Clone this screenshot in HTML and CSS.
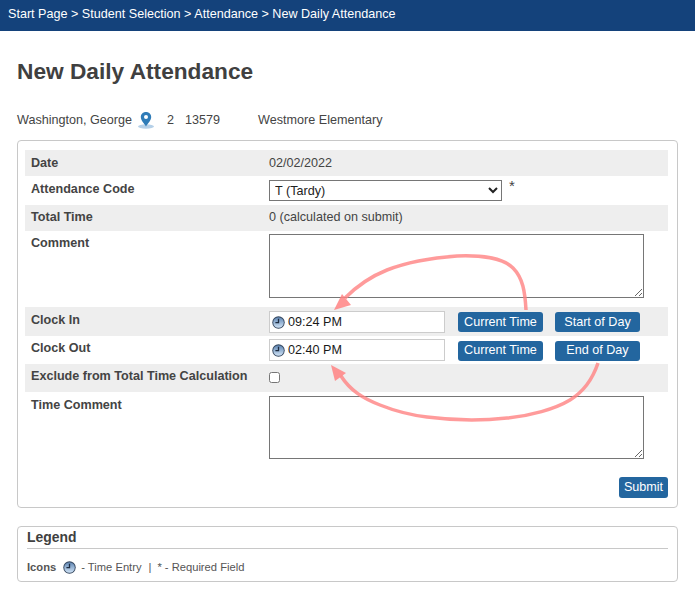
FILE: index.html
```html
<!DOCTYPE html>
<html lang="en">
<head>
  <meta charset="UTF-8">
  <title>New Daily Attendance</title>
  <link rel="stylesheet" href="styles.css">
</head>
<body>

<div class="crumbs">Start Page &gt; Student Selection &gt; Attendance &gt; New Daily Attendance</div>

<div class="page">
  <h1>New Daily Attendance</h1>

  <div class="student">
    <span>Washington, George</span>
    <svg class="pin" width="18" height="18" viewBox="0 0 18 18">
      <ellipse cx="9" cy="15.5" rx="8" ry="2.2" fill="#b5d0e8"/>
      <path d="M9 1C5.9 1 3.8 3.3 3.8 6c0 3.4 3.4 6.6 5.2 9.4C10.8 12.6 14.2 9.4 14.2 6 14.2 3.3 12.1 1 9 1z" fill="#2f7cb8"/>
      <circle cx="9" cy="6" r="2" fill="#fff"/>
    </svg>
    <span class="grade">2</span>
    <span class="sid">13579</span>
    <span class="school">Westmore Elementary</span>
  </div>

  <div class="panel">
    <div class="row shade r-date">
      <label>Date</label>
      <div class="val muted">02/02/2022</div>
    </div>
    <div class="row r-code">
      <label>Attendance Code</label>
      <div class="val">
        <select><option>T (Tardy)</option></select>
        <span class="req">*</span>
      </div>
    </div>
    <div class="row shade r-total">
      <label>Total Time</label>
      <div class="val muted">0 (calculated on submit)</div>
    </div>
    <div class="row r-comment">
      <label>Comment</label>
      <div class="val"><textarea></textarea></div>
    </div>
    <div class="row shade r-in">
      <label>Clock In</label>
      <div class="val">
        <div class="timebox">
          <svg class="clock" width="13" height="13" viewBox="0 0 13 13"><use href="#clock"/></svg>
          <span>09:24 PM</span>
        </div>
        <button class="btn now">Current Time</button>
        <button class="btn day">Start of Day</button>
      </div>
    </div>
    <div class="row r-out">
      <label>Clock Out</label>
      <div class="val">
        <div class="timebox">
          <svg class="clock" width="13" height="13" viewBox="0 0 13 13"><use href="#clock"/></svg>
          <span>02:40 PM</span>
        </div>
        <button class="btn now">Current Time</button>
        <button class="btn day">End of Day</button>
      </div>
    </div>
    <div class="row shade r-exclude">
      <label>Exclude from Total Time Calculation</label>
      <div class="val"><input type="checkbox"></div>
    </div>
    <div class="row r-comment2">
      <label>Time Comment</label>
      <div class="val"><textarea></textarea></div>
    </div>
    <div class="actions"><button class="btn">Submit</button></div>
  </div>

  <div class="legend">
    <h2>Legend</h2>
    <div class="legend-body">
      <span class="bold">Icons</span>
      <svg class="clock" width="13" height="13" viewBox="0 0 13 13"><use href="#clock"/></svg>
      <span>- Time Entry</span>
      <span class="sep">|</span>
      <span>*</span>
      <span class="req-note">- Required Field</span>
    </div>
  </div>
</div>

<!-- arrows drawn over the form -->
<svg class="arrows" width="695" height="592" viewBox="0 0 695 592">
  <path d="M526 310C525 292 523 278 513 268 503 258 480 255 457 256 430 258 405 263 387 270 372 276 358 285 345 298" />
  <polygon points="334,310 342,294 351,305" />
  <path d="M598 363C593 378 583 392 570 400 555 409 530 416 507 418 480 421 450 420 427 417 410 415 395 411 380 405 362 398 350 390 341 376" />
  <polygon points="331,365 346,373 335,381" />
</svg>

<svg width="0" height="0" class="defs">
  <defs>
    <linearGradient id="face" x1="0" y1="0" x2="0" y2="1">
      <stop offset="0" stop-color="#5f86b3"/>
      <stop offset="1" stop-color="#cfe2f5"/>
    </linearGradient>
  </defs>
  <symbol id="clock" viewBox="0 0 13 13">
    <circle cx="6.5" cy="6.5" r="6.2" fill="#34465e"/>
    <circle cx="6.5" cy="6.5" r="5.3" fill="url(#face)"/>
    <path d="M6.5 2.8v3.9H3.4" fill="none" stroke="#1f2d42" stroke-width="1.3"/>
  </symbol>
</svg>

</body>
</html>
```

FILE: styles.css
```css
* {
  box-sizing: border-box;
}

body {
  margin: 0;
  background: white;
  color: #444;
  font-family: "Liberation Sans", Arial, sans-serif;
  font-size: 12.6px;
  position: relative;
  overflow: hidden;
}

.crumbs {
  height: 31px;
  padding: 7px 8px 0;
  background: #14427b;
  color: white;
  line-height: 14px;
}

.page {
  padding: 0 17px;
}

h1 {
  margin: 0;
  padding-top: 27px;
  font-size: 22.7px;
  line-height: 27px;
  color: #404040;
}

.student {
  display: flex;
  align-items: center;
  height: 18px;
  margin-top: 26px;
  line-height: 18px;
}

.pin {
  margin-left: 5px;
}

.grade {
  margin-left: 12px;
}

.sid {
  margin-left: 11px;
}

.school {
  margin-left: 38px;
}

.panel {
  height: 368px;
  margin-top: 11px;
  padding: 9px 9px 0 7px;
  border: 1px solid #c8c8c8;
  border-radius: 4px;
}

.row {
  display: flex;
}

.row label {
  width: 244px;
  padding: 5px 0 0 6px;
  font-weight: bold;
  line-height: 15px;
}

.r-date label,
.r-code label,
.r-in label,
.r-comment2 label {
  padding-top: 6px;
}

.val {
  display: flex;
  align-items: flex-start;
  flex: 1;
}

.muted {
  padding-top: 5px;
  line-height: 15px;
}

.r-date .muted {
  padding-top: 6px;
}

.shade {
  background: #eee;
}

.r-date {
  height: 26px;
}

.r-code {
  height: 29px;
}

.r-code .val {
  padding-top: 4px;
}

select {
  width: 233px;
  height: 21px;
  padding: 0 0 0 1px;
  border: 1px solid #767676;
  border-radius: 0;
  background: white;
  color: #222;
  font-family: inherit;
  font-size: 12.6px;
}

.req {
  margin-left: 7px;
  margin-top: -1px;
  font-size: 15px;
  line-height: 14px;
}

.r-total {
  height: 26px;
}

.r-comment {
  height: 76px;
}

.r-comment .val {
  padding-top: 3px;
}

.r-comment textarea {
  height: 64px;
}

.r-comment2 .val {
  padding-top: 4px;
}

textarea {
  display: block;
  width: 375px;
  height: 63px;
  margin: 0;
  padding: 2px;
  border: 1px solid #767676;
  border-radius: 0;
  background: white;
}

.r-in {
  height: 29px;
}

.r-in .val {
  padding-top: 4px;
}

.r-in .btn {
  margin-top: 1px;
}

.r-out {
  height: 28px;
}

.r-out .val {
  padding-top: 3px;
}

.r-out .btn {
  margin-top: 2px;
  padding-bottom: 2px;
}

.timebox {
  display: flex;
  align-items: center;
  gap: 3px;
  width: 176px;
  height: 22px;
  padding-left: 2px;
  border: 1px solid #ccc;
  background: white;
  color: #1a1a1a;
}

.btn {
  height: 20px;
  padding: 0;
  border: none;
  border-radius: 3px;
  background: #23669f;
  color: white;
  font-family: inherit;
  font-size: 12.6px;
  line-height: 18px;
}

.now {
  width: 85px;
  margin-left: 13px;
}

.day {
  width: 85px;
  margin-left: 12px;
}

.r-exclude {
  height: 28px;
}

input[type="checkbox"] {
  width: 11px;
  height: 11px;
  margin: 8px 0 0 0;
}

.r-comment2 {
  height: 75px;
}

.actions {
  display: flex;
  justify-content: flex-end;
  padding-top: 10px;
}

.actions .btn {
  width: 49px;
  height: 21px;
  padding-bottom: 2px;
}

.legend {
  height: 56px;
  margin-top: 18px;
  padding: 2px 9px 0;
  border: 1px solid #c8c8c8;
  border-radius: 4px;
}

.legend h2 {
  margin: 0;
  padding-bottom: 3px;
  border-bottom: 1px solid #c8c8c8;
  color: #404040;
  font-size: 13.9px;
  line-height: 16px;
}

.legend-body {
  display: flex;
  align-items: center;
  margin-top: 11px;
  font-size: 11.2px;
  line-height: 14px;
  color: #555;
}

.legend-body .clock {
  margin: 0 5px 0 7px;
}

.sep {
  margin: 0 6px 0 7px;
}

.req-note {
  margin-left: 3px;
}

.bold {
  font-weight: bold;
}

.clock {
  flex: none;
}

.arrows {
  position: absolute;
  top: 0;
  left: 0;
  pointer-events: none;
}

.arrows path {
  fill: none;
  stroke: rgba(255, 130, 130, 0.8);
  stroke-width: 3.5;
}

.arrows polygon {
  fill: rgba(255, 130, 130, 0.85);
}

.defs {
  position: absolute;
}
```
